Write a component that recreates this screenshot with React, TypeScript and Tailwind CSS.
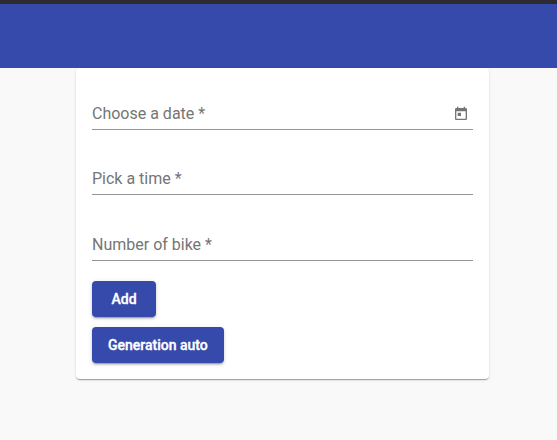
import React from 'react';

function CalendarIcon() {
  return (
    <svg viewBox="0 0 24 24" className="mt-px size-4 fill-[#757575]">
      <path d="M19 3h-1V1h-2v2H8V1H6v2H5c-1.11 0-1.99.9-1.99 2L3 19c0 1.1.89 2 2 2h14c1.1 0 2-.9 2-2V5c0-1.1-.9-2-2-2zm0 16H5V8h14v11zM7 10h5v5H7z" />
    </svg>
  );
}

function Field({ label, children }: { label: string; children?: React.ReactNode }) {
  return (
    <div className="flex h-[25px] items-start justify-between border-b border-[#949494] pr-1 text-[#757575]">
      <span className="text-base leading-[18px]">{label} *</span>
      {children}
    </div>
  );
}

function Button({ children }: { children: React.ReactNode }) {
  return (
    <button className="h-9 min-w-16 rounded bg-[#364aac] px-4 text-sm font-medium text-white [-webkit-text-stroke:0.35px_white] shadow-[0_3px_1px_-2px_rgba(0,0,0,0.2),0_2px_2px_0_rgba(0,0,0,0.14),0_1px_5px_0_rgba(0,0,0,0.12)]">
      {children}
    </button>
  );
}

export default function App() {
  return (
    <div className="h-[440px] w-[557px] overflow-hidden bg-[#f9f9f9] font-['Roboto',sans-serif]">
      <header className="h-[68px] border-t-4 border-[#2c2b32] bg-[#364aac]" />
      <main className="ml-[76px] h-[311px] w-[413px] rounded bg-white px-4 pt-[37px] shadow-[0_2px_1px_-1px_rgba(0,0,0,0.2),0_1px_1px_0_rgba(0,0,0,0.14),0_1px_3px_0_rgba(0,0,0,0.12)]">
        <form className="flex flex-col">
          <Field label="Choose a date"><CalendarIcon /></Field>
          <div className="mt-10"><Field label="Pick a time" /></div>
          <div className="mt-[41px]"><Field label="Number of bike" /></div>
          <div className="mt-5 flex flex-col items-start gap-2.5">
            <Button>Add</Button>
            <Button>Generation auto</Button>
          </div>
        </form>
      </main>
    </div>
  );
}
